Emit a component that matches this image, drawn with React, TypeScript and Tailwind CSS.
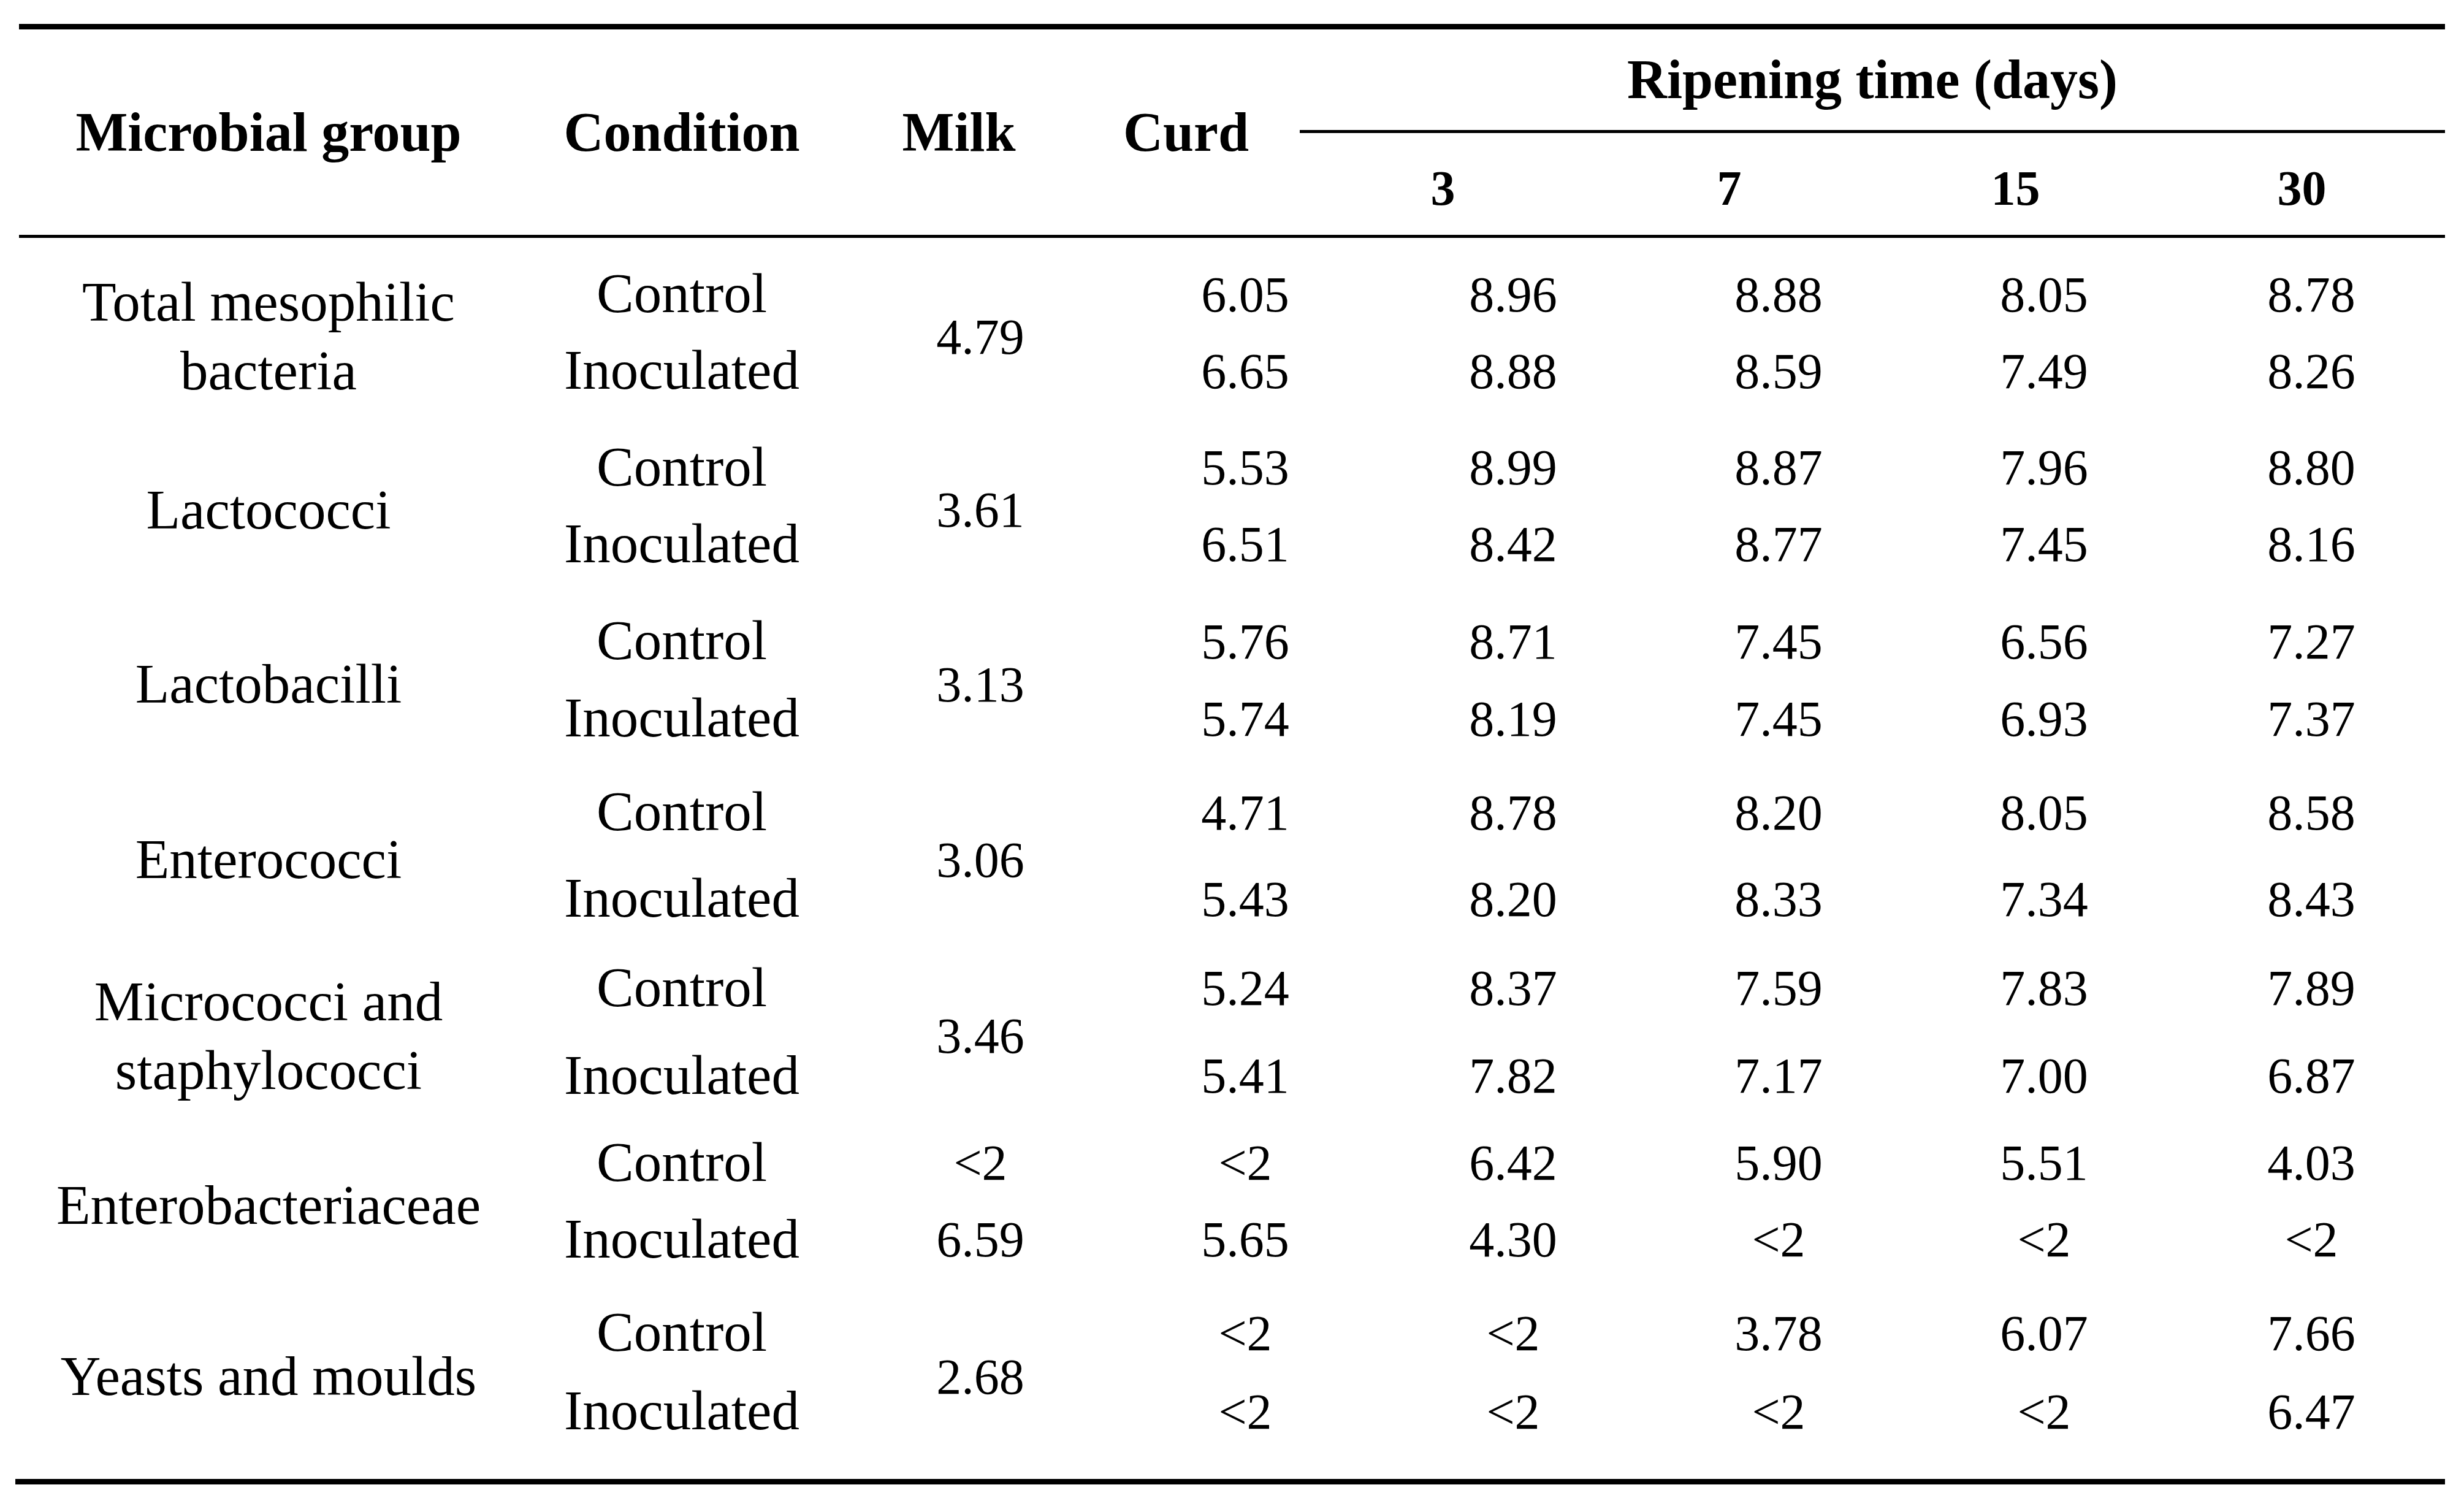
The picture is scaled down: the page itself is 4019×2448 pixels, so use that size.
const cols = "grid grid-cols-[814px_534px_370px_371px_467px_467px_467px_467px]"

// horizontal nudge of the numbers inside their columns (the source uses tab stops)
const numPad = ["pl-[193px]", "pl-[229px]", "pl-[161px]", "pl-[93px]", "pl-[31px]"]

type Group = {
  label: string[]
  milk: string | string[]
  rows: string[][]
  h: string
  lh: string
}

const groups: Group[] = [
  {
    label: ["Total mesophilic", "bacteria"],
    milk: "4.79",
    rows: [
      ["6.05", "8.96", "8.88", "8.05", "8.78"],
      ["6.65", "8.88", "8.59", "7.49", "8.26"],
    ],
    h: "h-[282px]",
    lh: "leading-[125px]",
  },
  {
    label: ["Lactococci"],
    milk: "3.61",
    rows: [
      ["5.53", "8.99", "8.87", "7.96", "8.80"],
      ["6.51", "8.42", "8.77", "7.45", "8.16"],
    ],
    h: "h-[283px]",
    lh: "leading-[125px]",
  },
  {
    label: ["Lactobacilli"],
    milk: "3.13",
    rows: [
      ["5.76", "8.71", "7.45", "6.56", "7.27"],
      ["5.74", "8.19", "7.45", "6.93", "7.37"],
    ],
    h: "h-[286px]",
    lh: "leading-[126px]",
  },
  {
    label: ["Enterococci"],
    milk: "3.06",
    rows: [
      ["4.71", "8.78", "8.20", "8.05", "8.58"],
      ["5.43", "8.20", "8.33", "7.34", "8.43"],
    ],
    h: "h-[286px]",
    lh: "leading-[141px]",
  },
  {
    label: ["Micrococci and", "staphylococci"],
    milk: "3.46",
    rows: [
      ["5.24", "8.37", "7.59", "7.83", "7.89"],
      ["5.41", "7.82", "7.17", "7.00", "6.87"],
    ],
    h: "h-[281px]",
    lh: "leading-[143px]",
  },
  {
    label: ["Enterobacteriaceae"],
    milk: ["<2", "6.59"],
    rows: [
      ["<2", "6.42", "5.90", "5.51", "4.03"],
      ["5.65", "4.30", "<2", "<2", "<2"],
    ],
    h: "h-[279px]",
    lh: "leading-[125px]",
  },
  {
    label: ["Yeasts and moulds"],
    milk: "2.68",
    rows: [
      ["<2", "<2", "3.78", "6.07", "7.66"],
      ["<2", "<2", "<2", "<2", "6.47"],
    ],
    h: "h-[280px]",
    lh: "leading-[128px]",
  },
]

function GroupRow({ g }: { g: Group }) {
  return (
    <div className={`${cols} ${g.h} items-center`}>
      <div className="flex translate-y-[8px] flex-col items-center text-center leading-[112px]">
        {g.label.map((l) => (
          <span key={l}>{l}</span>
        ))}
      </div>
      <div className={`flex flex-col items-center ${g.lh}`}>
        <span>Control</span>
        <span>Inoculated</span>
      </div>
      {Array.isArray(g.milk) ? (
        <div className={`flex flex-col items-center pl-[70px] pt-[3px] text-[82px] ${g.lh}`}>
          {g.milk.map((v, i) => (
            <span key={i}>{v}</span>
          ))}
        </div>
      ) : (
        <div className="flex translate-y-[8px] justify-center pl-[70px] text-[82px] leading-[125px]">
          {g.milk}
        </div>
      )}
      {numPad.map((pad, c) => (
        <div key={c} className={`flex flex-col items-center pt-[3px] text-[82px] ${pad} ${g.lh}`}>
          <span>{g.rows[0][c]}</span>
          <span>{g.rows[1][c]}</span>
        </div>
      ))}
    </div>
  )
}

export default function App() {
  return (
    <div className="h-[2448px] w-[4019px] bg-white pl-[31px] pt-[39px] font-['Liberation_Serif',serif] text-[91px] text-black">
      <div className="flex w-[3957px] flex-col">
        <div className="h-[9px] bg-black" />

        {/* header */}
        <div className={`${cols} h-[335px] font-bold text-[90px] leading-[100px]`}>
          <div className="flex items-center justify-center">Microbial group</div>
          <div className="flex items-center justify-center">Condition</div>
          <div className="flex items-center justify-center">Milk</div>
          <div className="flex items-center justify-center">Curd</div>
          <div className="col-span-4 flex flex-col">
            <div className="flex h-[164px] items-center justify-center">Ripening time (days)</div>
            <div className="h-[5px] bg-black" />
            <div className="grid h-[166px] grid-cols-4 pt-[14px] text-[80px]">
              {["3", "7", "15", "30"].map((d) => (
                <div key={d} className="flex items-center justify-center">
                  {d}
                </div>
              ))}
            </div>
          </div>
        </div>
        <div className="h-[5px] bg-black" />

        {/* body */}
        <div className="flex flex-col pt-[12px]">
          {groups.map((g) => (
            <GroupRow key={g.label[0]} g={g} />
          ))}
        </div>

        <div className="-ml-[6px] mt-[35px] h-[9px] w-[3963px] bg-black" />
      </div>
    </div>
  )
}
